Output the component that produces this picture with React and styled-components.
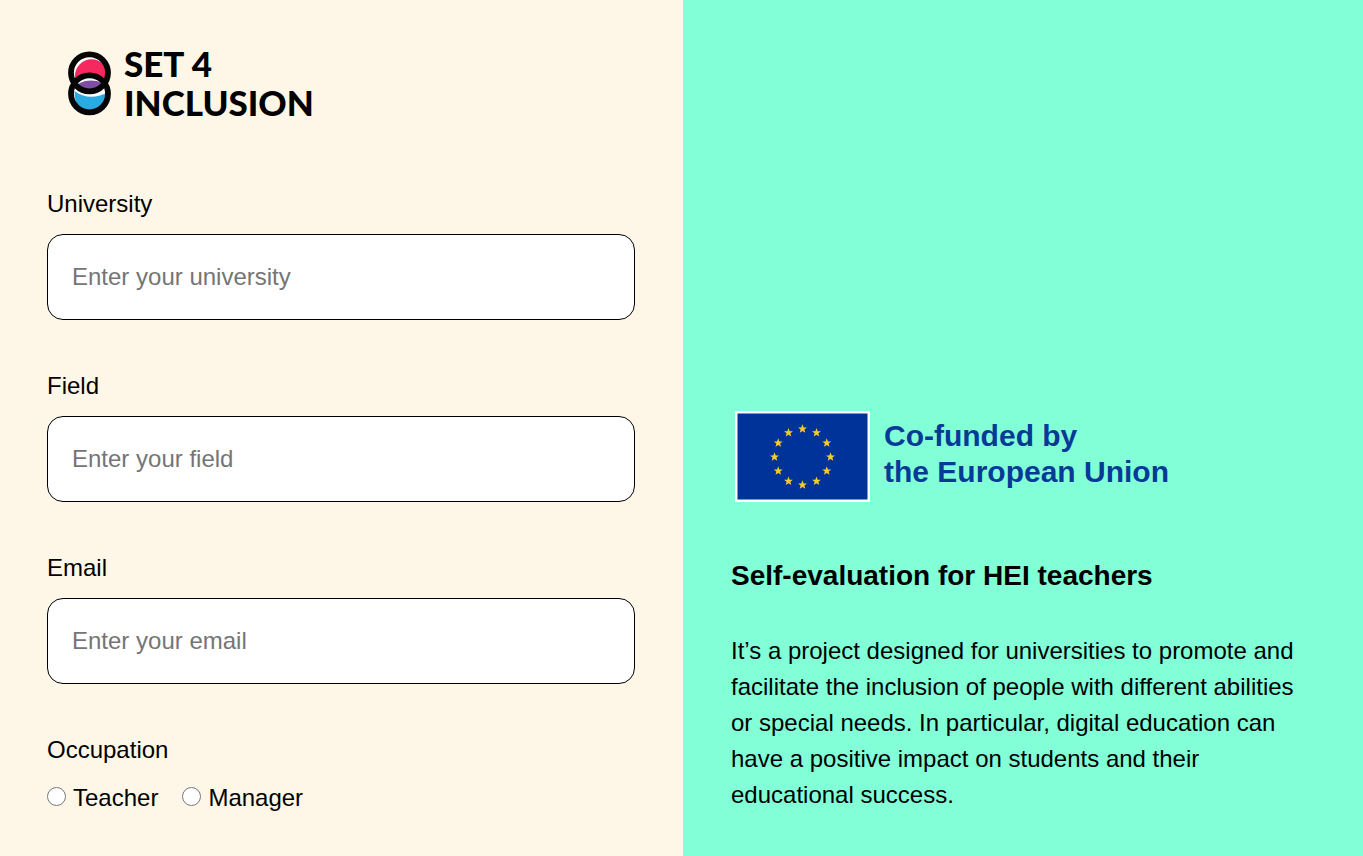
import React from "react";
import styled, { createGlobalStyle } from "styled-components";

const GlobalStyle = createGlobalStyle`
  *, *::before, *::after { box-sizing: border-box; }
  body {
    margin: 0;
    color: #000;
    background: #fef7e8;
    font-family: "Liberation Sans", Arial, sans-serif;
    font-size: 24px;
    line-height: 36px;
  }
`;

const Page = styled.div`
  display: grid;
  grid-template-columns: 683fr 680fr;
  min-height: 100vh;
`;

const FormPanel = styled.main`
  padding: 44px 48px 40px 47px;
  background: #fef7e8;
`;

const InfoPanel = styled.aside`
  display: flex;
  flex-direction: column;
  justify-content: flex-end;
  padding: 43px 48px;
  background: #82ffd6;
`;

const Logo = styled.header`
  display: flex;
  align-items: center;
  gap: 12px;
  margin: 0 0 64px 20px;
`;

const LogoMark = styled.svg`
  display: block;
  flex: none;
`;

const LogoText = styled.div`
  font-family: Lato, sans-serif;
  font-weight: 900;
  font-size: 35px;
  line-height: 39px;
`;

const Form = styled.form`
  display: flex;
  flex-direction: column;
  gap: 48px;
`;

const Field = styled.div`
  display: flex;
  flex-direction: column;
  gap: 12px;
`;

const TextInput = styled.input`
  width: 100%;
  height: 86px;
  padding: 24px;
  border: 1px solid #000;
  border-radius: 16px;
  background: #fff;
  font: inherit;

  &::placeholder { color: #757575; }
`;

const Choices = styled.fieldset`
  margin: 0;
  padding: 0;
  border: 0;
`;

const Legend = styled.legend`
  padding: 0;
  margin-bottom: 12px;
`;

const ChoiceRow = styled.div`
  display: flex;
  gap: 24px;
`;

const Choice = styled.label`
  display: flex;
  align-items: center;
  gap: 7px;
`;

const Radio = styled.input`
  width: 19px;
  height: 19px;
  margin: 0 0 3px;
`;

const Funding = styled.div`
  display: flex;
  align-items: center;
  gap: 14px;
  margin: 0 0 53px 4px;
`;

const FundingText = styled.p`
  margin: 0 0 6px;
  color: #063a97;
  font-weight: 700;
  font-size: 30px;
`;

const Title = styled.h1`
  margin: 0 0 36px;
  font-size: 28px;
  line-height: 42px;
`;

const Description = styled.p`
  margin: 0;
`;

const fields = [
  { id: "university", label: "University", type: "text" },
  { id: "field", label: "Field", type: "text" },
  { id: "email", label: "Email", type: "email" },
];

const star = Array.from({ length: 10 }, (_, i) => {
  const r = i % 2 ? 2 : 4.7;
  const a = (i * Math.PI) / 5;
  return `${(r * Math.sin(a)).toFixed(2)},${(-r * Math.cos(a)).toFixed(2)}`;
}).join(" ");

function Rings() {
  return (
    <LogoMark width="45" height="66" viewBox="0 0 45 66" aria-hidden="true">
      <defs>
        <clipPath id="upper"><circle cx="22.5" cy="22.8" r="18.5" /></clipPath>
        <clipPath id="lower"><circle cx="22.5" cy="43.8" r="18.5" /></clipPath>
      </defs>
      <circle cx="22.5" cy="22.8" r="18.5" fill="#fff" />
      <circle cx="22.5" cy="43.8" r="18.5" fill="#fff" />
      <g clipPath="url(#upper)">
        <circle cx="24.5" cy="25.8" r="16.5" fill="#f5285f" />
      </g>
      <g clipPath="url(#lower)">
        <path d="M7.5 41Q22 52 42 42V66H14Q7.500 54 7.500 41Z" fill="#29abe2" />
        <g clipPath="url(#upper)">
          <rect x="3" y="24" width="39" height="18" fill="#fff" />
          <ellipse cx="24" cy="38" rx="15" ry="7.5" fill="#804ca4" />
        </g>
      </g>
      <g fill="none" stroke="#050505" strokeWidth="5.8">
        <circle cx="22.5" cy="22.8" r="18.5" />
        <circle cx="22.5" cy="43.8" r="18.5" />
      </g>
    </LogoMark>
  );
}

function EuropeanFlag() {
  return (
    <LogoMark width="135" height="91" viewBox="0 0 135 91" role="img" aria-label="European flag">
      <rect width="135" height="91" fill="#fff" />
      <rect x="2.5" y="2.5" width="130" height="86" fill="#003399" />
      {Array.from({ length: 12 }, (_, i) => {
        const a = (i * Math.PI) / 6;
        return (
          <polygon
            key={i}
            points={star}
            fill="#f7cb2d"
            transform={`translate(${67.5 + 28 * Math.sin(a)} ${46 - 28 * Math.cos(a)})`}
          />
        );
      })}
    </LogoMark>
  );
}

export default function App() {
  return (
    <>
      <GlobalStyle />
      <Page>
        <FormPanel>
          <Logo>
            <Rings />
            <LogoText>
              SET 4<br />INCLUSION
            </LogoText>
          </Logo>
          <Form>
            {fields.map(({ id, label, type }) => (
              <Field key={id}>
                <label htmlFor={id}>{label}</label>
                <TextInput id={id} name={id} type={type} placeholder={`Enter your ${id}`} />
              </Field>
            ))}
            <Choices>
              <Legend>Occupation</Legend>
              <ChoiceRow>
                {["Teacher", "Manager"].map((name) => (
                  <Choice key={name}>
                    <Radio type="radio" name="occupation" value={name} />
                    {name}
                  </Choice>
                ))}
              </ChoiceRow>
            </Choices>
          </Form>
        </FormPanel>
        <InfoPanel>
          <Funding>
            <EuropeanFlag />
            <FundingText>
              Co-funded by<br />the European Union
            </FundingText>
          </Funding>
          <Title>Self-evaluation for HEI teachers</Title>
          <Description>
            It’s a project designed for universities to promote and facilitate the inclusion of
            people with different abilities or special needs. In particular, digital education can
            have a positive impact on students and their educational success.
          </Description>
        </InfoPanel>
      </Page>
    </>
  );
}
